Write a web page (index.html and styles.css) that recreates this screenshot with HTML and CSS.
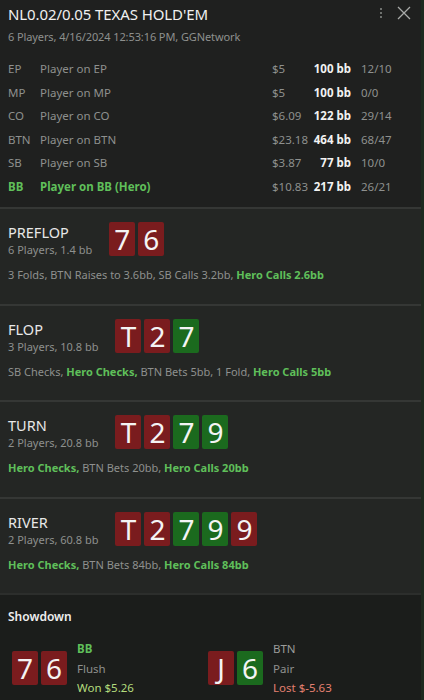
FILE: index.html
```html
<!DOCTYPE html>
<html lang="en">
<head>
    <meta charset="UTF-8">
    <meta name="viewport" content="width=device-width, initial-scale=1.0">
    <title>Hand history</title>
    <link rel="stylesheet" href="styles.css">
</head>
<body>
<div class="panel">
    <div class="header">
        <div class="title-row">
            <div class="title">NL0.02/0.05 TEXAS HOLD'EM</div>
            <div class="tools">
                <svg width="4" height="12" viewBox="0 0 4 12"><circle cx="2" cy="2" r="1" fill="#8a8c8a"/><circle cx="2" cy="6" r="1" fill="#8a8c8a"/><circle cx="2" cy="10" r="1" fill="#8a8c8a"/></svg>
                <svg width="14" height="14" viewBox="0 0 14 14"><path d="M1 1 L13 13 M13 1 L1 13" stroke="#a8aaa8" stroke-width="1.3"/></svg>
            </div>
        </div>
        <div class="sub">6 Players, 4/16/2024 12:53:16 PM, GGNetwork</div>

        <table class="players">
            <tr><td class="pos">EP</td><td class="name">Player on EP</td><td class="cash">$5</td><td class="bb">100 bb</td><td class="rec">12/10</td></tr>
            <tr><td class="pos">MP</td><td class="name">Player on MP</td><td class="cash">$5</td><td class="bb">100 bb</td><td class="rec">0/0</td></tr>
            <tr><td class="pos">CO</td><td class="name">Player on CO</td><td class="cash">$6.09</td><td class="bb">122 bb</td><td class="rec">29/14</td></tr>
            <tr><td class="pos">BTN</td><td class="name">Player on BTN</td><td class="cash">$23.18</td><td class="bb">464 bb</td><td class="rec">68/47</td></tr>
            <tr><td class="pos">SB</td><td class="name">Player on SB</td><td class="cash">$3.87</td><td class="bb">77 bb</td><td class="rec">10/0</td></tr>
            <tr class="hero"><td class="pos">BB</td><td class="name">Player on BB (Hero)</td><td class="cash">$10.83</td><td class="bb">217 bb</td><td class="rec">26/21</td></tr>
        </table>
    </div>

    <div class="street">
        <div class="street-top">
            <div class="street-info">
                <div class="street-name">PREFLOP</div>
                <div class="street-sub">6 Players, 1.4 bb</div>
            </div>
            <div class="cards">
                <span class="card red">7</span><span class="card red">6</span>
            </div>
        </div>
        <div class="actions">3 Folds, BTN Raises to 3.6bb, SB Calls 3.2bb, <b class="hero-act">Hero Calls 2.6bb</b></div>
    </div>

    <div class="street">
        <div class="street-top">
            <div class="street-info">
                <div class="street-name">FLOP</div>
                <div class="street-sub">3 Players, 10.8 bb</div>
            </div>
            <div class="cards">
                <span class="card red">T</span><span class="card red">2</span><span class="card green">7</span>
            </div>
        </div>
        <div class="actions">SB Checks, <b class="hero-act">Hero Checks,</b> BTN Bets 5bb, 1 Fold, <b class="hero-act">Hero Calls 5bb</b></div>
    </div>

    <div class="street">
        <div class="street-top">
            <div class="street-info">
                <div class="street-name">TURN</div>
                <div class="street-sub">2 Players, 20.8 bb</div>
            </div>
            <div class="cards">
                <span class="card red">T</span><span class="card red">2</span><span class="card green">7</span><span class="card green">9</span>
            </div>
        </div>
        <div class="actions"><b class="hero-act">Hero Checks,</b> BTN Bets 20bb, <b class="hero-act">Hero Calls 20bb</b></div>
    </div>

    <div class="street">
        <div class="street-top">
            <div class="street-info">
                <div class="street-name">RIVER</div>
                <div class="street-sub">2 Players, 60.8 bb</div>
            </div>
            <div class="cards">
                <span class="card red">T</span><span class="card red">2</span><span class="card green">7</span><span class="card green">9</span><span class="card red">9</span>
            </div>
        </div>
        <div class="actions"><b class="hero-act">Hero Checks,</b> BTN Bets 84bb, <b class="hero-act">Hero Calls 84bb</b></div>
    </div>

    <div class="showdown">
        <div class="showdown-title">Showdown</div>
        <div class="hands">
            <div class="hand">
                <div class="cards">
                    <span class="card red">7</span><span class="card red">6</span>
                </div>
                <div class="hand-info">
                    <div class="hand-pos hero-act">BB</div>
                    <div class="hand-rank">Flush</div>
                    <div class="won">Won $5.26</div>
                </div>
            </div>
            <div class="hand">
                <div class="cards">
                    <span class="card red">J</span><span class="card green">6</span>
                </div>
                <div class="hand-info">
                    <div class="hand-pos">BTN</div>
                    <div class="hand-rank">Pair</div>
                    <div class="lost">Lost $-5.63</div>
                </div>
            </div>
        </div>
    </div>
</div>
</body>
</html>
```

FILE: styles.css
```css
body {
    margin: 0;
    background-color: #1f201f;
    font-family: "Noto Sans", "Open Sans", sans-serif;
    color: #9a9c9a;
    font-size: 12px;
}

.panel {
    width: 421px;
    height: 700px;
    overflow: hidden;
    border-right: 3px solid #1d2a1f;
    background-color: #1f201f;
}

.header {
    padding: 3px 8px 9px 8px;
}

.title-row {
    display: flex;
    justify-content: space-between;
    align-items: flex-start;
}

.title {
    color: #f0f0f0;
    font-size: 15px;
    line-height: 22px;
    letter-spacing: -0.1px;
}

.tools {
    display: flex;
    align-items: center;
    gap: 14px;
    padding-top: 3px;
    padding-right: 2px;
}

.sub {
    margin-top: 4px;
    font-size: 11px;
    letter-spacing: -0.1px;
    color: #8e908e;
}

.players {
    margin-top: 13px;
    border-collapse: collapse;
    font-size: 11.5px;
}

.players td {
    padding: 0;
    height: 23.5px;
    color: #8e908e;
}

.players .pos {
    width: 32px;
}

.players .name {
    width: 232px;
}

.players .cash {
    width: 40px;
}

.players .bb {
    width: 39px;
    text-align: right;
    color: #f2f2f2;
    font-weight: bold;
    padding-right: 10px;
}

.players .hero .pos,
.players .hero .name {
    color: #5fbf5a;
    font-weight: bold;
}

.street {
    background-color: #242624;
    border-top: 2px solid #353735;
    height: 96.5px;
    box-sizing: border-box;
    padding: 13px 8px 0 8px;
}

.street-top {
    display: flex;
    align-items: flex-start;
    gap: 17px;
}

.street-name {
    color: #e8e8e8;
    font-size: 14.5px;
    line-height: 20px;
}

.street-sub {
    color: #8e908e;
    font-size: 11px;
    line-height: 15px;
}

.cards {
    display: flex;
    gap: 3px;
}

.card {
    display: flex;
    align-items: center;
    justify-content: center;
    width: 26px;
    height: 34px;
    border-radius: 2px;
    color: #f4f4f4;
    font-size: 28px;
    line-height: 1;
}

.card.red {
    background-color: #7a1c1e;
}

.card.green {
    background-color: #1b6a1e;
}

.actions {
    margin-top: 10px;
    color: #8e908e;
    font-size: 11px;
}

.hero-act {
    color: #5fbf5a;
    font-weight: bold;
}

.showdown {
    background-color: #1b1d1b;
    border-top: 2px solid #2c2e2c;
    padding: 13px 8px 0 8px;
    height: 120px;
}

.showdown-title {
    color: #eeeeee;
    font-size: 12px;
    font-weight: 600;
}

.hands {
    display: flex;
    margin-top: 14px;
}

.hand {
    display: flex;
    align-items: center;
    gap: 10px;
    width: 192px;
    padding-left: 4px;
}

.hand-info div {
    line-height: 19.5px;
    font-size: 11.5px;
}

.hand-rank {
    color: #8e908e;
}

.won {
    color: #b3dc7d;
}

.lost {
    color: #e48070;
}
```
